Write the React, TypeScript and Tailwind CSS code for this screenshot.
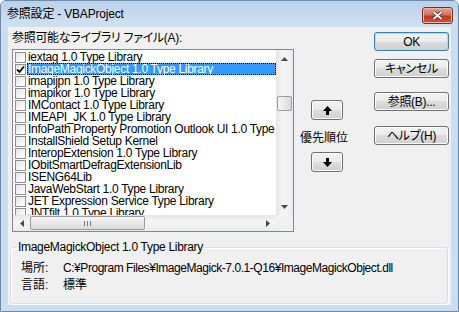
import type { ReactNode } from 'react'
import clsx from 'clsx'

const LIBS = [
  'iextag 1.0 Type Library',
  'ImageMagickObject 1.0 Type Library',
  'imapijpn 1.0 Type Library',
  'imapikor 1.0 Type Library',
  'IMContact 1.0 Type Library',
  'IMEAPI_JK 1.0 Type Library',
  'InfoPath Property Promotion Outlook UI 1.0 Type Library',
  'InstallShield Setup Kernel',
  'InteropExtension 1.0 Type Library',
  'IObitSmartDefragExtensionLib',
  'ISENG64Lib',
  'JavaWebStart 1.0 Type Library',
  'JET Expression Service Type Library',
  'JNTfilt 1.0 Type Library',
]

const SELECTED = 1

export default function App() {
  return (
    <div className="w-[459px] h-[312px] flex flex-col bg-[#cbddf0] border border-[#6c8bab] rounded-t-[6px] overflow-hidden text-[12px] text-black font-['Liberation_Sans','Noto_Sans_CJK_JP',sans-serif] [font-feature-settings:'palt']">
      {/* title bar */}
      <div className="h-[26px] shrink-0 flex items-center pl-[6px] pr-[5px] bg-[linear-gradient(#b9d1ea,#c9dcf0_60%,#cfe0f2)]">
        <span className="flex-1 leading-none tracking-[-0.2px] pb-[1px]">参照設定 - VBAProject</span>
        <CloseButton />
      </div>

      {/* body */}
      <div className="flex-1 mx-[7px] mb-[6px] bg-[#f0f0f0] flex flex-col">
        <div className="flex items-start">
          {/* list column */}
          <div className="ml-[4px] pt-[4px] flex flex-col">
            <div className="h-[14px] leading-[14px] tracking-[-0.3px]">参照可能なライブラリ ファイル(A):</div>
            <LibraryList />
          </div>

          {/* priority */}
          <div className="ml-[6px] w-[48px] pt-[73px] flex flex-col items-start">
            <WinButton className="ml-[11px] w-[32px] h-[20px]">
              <Arrow up />
            </WinButton>
            <div className="mt-[11px] w-[48px] h-[14px] leading-[14px] text-center">優先順位</div>
            <WinButton className="mt-[7px] ml-[11px] w-[32px] h-[20px]">
              <Arrow />
            </WinButton>
          </div>

          {/* action buttons */}
          <div className="ml-[26px] pt-[5px] flex flex-col">
            <WinButton primary className="w-[75px] h-[19px]">OK</WinButton>
            <WinButton className="mt-[8px] w-[75px] h-[19px]">キャンセル</WinButton>
            <WinButton className="mt-[14px] w-[75px] h-[19px]">参照(B)...</WinButton>
            <WinButton className="mt-[15px] w-[75px] h-[19px]">ヘルプ(H)</WinButton>
          </div>
        </div>

        {/* details group */}
        <fieldset className="mt-[8px] ml-[2px] w-[438px] h-[64px] border border-[#d5dfe5] rounded-[3px] shadow-[inset_1px_1px_0_#ffffff,1px_1px_0_#ffffff]">
          <legend className="ml-[5px] px-[2px] leading-[14px] tracking-[-0.3px]">ImageMagickObject 1.0 Type Library</legend>
          <div className="pl-[10px] pt-[7px] flex flex-col gap-[3px]">
            <div className="flex h-[14px] leading-[14px]">
              <span className="w-[42px]">場所:</span>
              <span className="tracking-[-0.45px]">C:¥Program Files¥ImageMagick-7.0.1-Q16¥ImageMagickObject.dll</span>
            </div>
            <div className="flex h-[14px] leading-[14px]">
              <span className="w-[42px]">言語:</span>
              <span>標準</span>
            </div>
          </div>
        </fieldset>
      </div>
    </div>
  )
}

function LibraryList() {
  return (
    <div className="mt-[4px] w-[282px] h-[183px] border border-[#828790] bg-white flex flex-col">
      <div className="flex h-[165px]">
        <div className="flex-1 pt-[1px] overflow-hidden">
          {LIBS.map((name, i) => (
            <div key={name} className="h-[12px] flex items-center whitespace-nowrap">
              <span className="ml-[2px] w-[11px] h-[11px] shrink-0 border border-[#8e8f8f] bg-[linear-gradient(135deg,#e4e4e4,#ffffff)] flex items-center justify-center">
                {i === SELECTED && (
                  <svg width="9" height="9" viewBox="0 0 9 9">
                    <path d="M1 4.5 L3.5 7 L8 1.5" fill="none" stroke="#000" strokeWidth="1.8" />
                  </svg>
                )}
              </span>
              <span
                className={clsx(
                  'ml-[1px] h-[12px] leading-[12px] pl-[1px] tracking-[-0.3px]',
                  i === SELECTED
                    ? 'flex-1 bg-[#3399ff] text-white outline-1 outline-dotted outline-black -outline-offset-1'
                    : '',
                )}
              >
                {name}
              </span>
            </div>
          ))}
        </div>
        {/* vertical scrollbar */}
        <div className="w-[17px] flex flex-col bg-[linear-gradient(to_right,#e6e6e6,#f4f4f4_40%,#f0f0f0_80%,#e9e9e9)]">
          <div className="h-[17px] flex items-center justify-center">
            <Tri dir="up" />
          </div>
          <div className="h-[29px]" />
          <div className="mx-[1px] h-[15px] rounded-[2px] border border-[#9b9b9b] bg-[linear-gradient(to_right,#f6f6f6,#e9e9e9_50%,#d8d8d8)]" />
          <div className="flex-1" />
          <div className="h-[17px] flex items-center justify-center">
            <Tri dir="down" />
          </div>
        </div>
      </div>
      {/* horizontal scrollbar */}
      <div className="h-[16px] flex">
        <div className="flex-1 flex bg-[linear-gradient(#e6e6e6,#f4f4f4_40%,#f0f0f0_80%,#e9e9e9)]">
          <div className="w-[17px] flex items-center justify-center">
            <Tri dir="left" />
          </div>
          <div className="my-[1px] w-[115px] rounded-[2px] border border-[#9b9b9b] bg-[linear-gradient(#f6f6f6,#e9e9e9_50%,#d8d8d8)] flex items-center justify-center gap-[2px]">
            <span className="w-[1px] h-[5px] bg-[#7a7a7a]" />
            <span className="w-[1px] h-[5px] bg-[#7a7a7a]" />
            <span className="w-[1px] h-[5px] bg-[#7a7a7a]" />
          </div>
          <div className="flex-1" />
          <div className="w-[17px] flex items-center justify-center">
            <Tri dir="right" />
          </div>
        </div>
        <div className="w-[17px] bg-[#f0f0f0]" />
      </div>
    </div>
  )
}

function Tri({ dir }: { dir: 'up' | 'down' | 'left' | 'right' }) {
  const pts = {
    up: '0,4 7,4 3.5,0',
    down: '0,0 7,0 3.5,4',
    left: '4,0 4,7 0,3.5',
    right: '0,0 0,7 4,3.5',
  }[dir]
  const horizontal = dir === 'left' || dir === 'right'
  return (
    <svg width={horizontal ? 4 : 7} height={horizontal ? 7 : 4} viewBox={horizontal ? '0 0 4 7' : '0 0 7 4'}>
      <polygon points={pts} fill="#4a4a4a" />
    </svg>
  )
}

function Arrow({ up }: { up?: boolean }) {
  return (
    <svg width="9" height="9" viewBox="0 0 9 9" className={up ? '' : 'rotate-180'}>
      <polygon points="4.5,0 9,5 6,5 6,9 3,9 3,5 0,5" fill="#000" />
    </svg>
  )
}

function WinButton({
  children,
  primary,
  className,
}: {
  children: ReactNode
  primary?: boolean
  className?: string
}) {
  return (
    <button
      className={clsx(
        'flex items-center justify-center rounded-[3px] border leading-none tracking-[-0.3px] bg-[linear-gradient(#f2f2f2_0%,#ebebeb_50%,#dddddd_50%,#cfcfcf_100%)]',
        primary
          ? 'border-[#3c7fb1] shadow-[inset_0_0_0_1px_#a8dcf6]'
          : 'border-[#707070] shadow-[inset_0_0_0_1px_#fcfcfc]',
        className,
      )}
    >
      {children}
    </button>
  )
}

function CloseButton() {
  return (
    <div className="mt-[2px] w-[31px] h-[17px] rounded-[3px] border border-[#7a2f25] bg-[linear-gradient(#e3a193,#cf7360_45%,#b83b22_55%,#c9553a)] flex items-center justify-center shadow-[inset_0_0_0_1px_#eab6a8]">
      <svg width="11" height="9" viewBox="0 0 11 9">
        <path d="M1.5 1 L9.5 8 M9.5 1 L1.5 8" stroke="#4a1a12" strokeWidth="3.4" />
        <path d="M1.5 1 L9.5 8 M9.5 1 L1.5 8" stroke="#ffffff" strokeWidth="2" />
      </svg>
    </div>
  )
}
